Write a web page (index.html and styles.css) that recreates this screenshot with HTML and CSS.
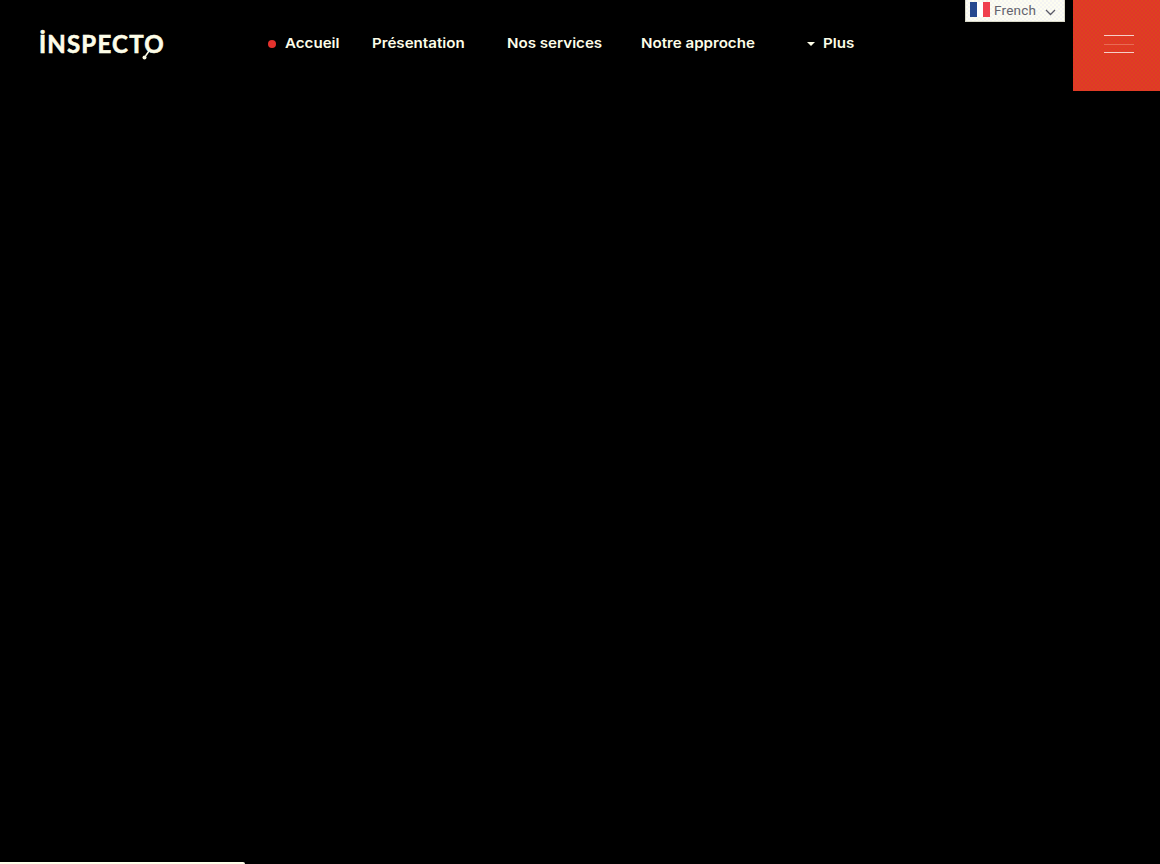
FILE: index.html
```html
<!DOCTYPE html>
<html lang="fr">

<head>
    <meta charset="UTF-8">
    <meta name="viewport" content="width=device-width, initial-scale=1.0">
    <link rel="stylesheet" href="styles.css">
    <title>Inspecto</title>
</head>

<body>

    <header class="entete">
        <a class="logo" href="#">
            <span class="logo-texte">İNSPECTO</span>
            <svg class="logo-queue" width="10" height="10" viewBox="0 0 10 10">
                <path d="M8 1L4.500 6" fill="none" stroke="#fdfde8" stroke-width="1.500"/>
                <circle cx="3.500" cy="7.500" r="2" fill="#fdfde8"/>
            </svg>
        </a>

        <nav class="menu">
            <a class="lien lien-actif" href="#"><span class="puce"></span><span class="mot">Accueil</span></a>
            <a class="lien lien-presentation" href="#"><span class="mot">Présentation</span></a>
            <a class="lien lien-services" href="#"><span class="mot">Nos services</span></a>
            <a class="lien lien-approche" href="#"><span class="mot">Notre approche</span></a>
            <a class="lien lien-plus" href="#"><span class="fleche"></span><span class="mot">Plus</span></a>
        </nav>

        <div class="langue">
            <svg class="drapeau" width="20" height="15" viewBox="0 0 20 15">
                <rect width="7" height="15" fill="#26488f"/>
                <rect x="7" width="6" height="15" fill="#fff"/>
                <rect x="13" width="7" height="15" fill="#f0404f"/>
            </svg>
            <span class="langue-nom">French</span>
            <svg class="chevron" width="11" height="7" viewBox="0 0 11 7">
                <path d="M1 1l4.500 4.500L10 1" fill="none" stroke="#5a5a66" stroke-width="1.300"/>
            </svg>
        </div>

        <button class="burger" type="button" aria-label="Menu">
            <span></span>
            <span class="trait-pale"></span>
            <span></span>
        </button>
    </header>

    <div class="barre-bas"></div>

</body>
</html>
```

FILE: styles.css
```css
html, body {
    height: 100%;
}

body {
    margin: 0;
    background: #000;
    overflow: hidden;
    display: flex;
    flex-direction: column;
    justify-content: space-between;
    font-family: "Inter", "Liberation Sans", sans-serif;
}

.entete {
    display: flex;
    align-items: flex-start;
    height: 91px;
}

.logo {
    position: relative;
    width: 229px;
    margin: 28px 0 0 39px;
    flex-shrink: 0;
    text-decoration: none;
}

.logo-texte {
    color: #fdfde8;
    font-family: "Lato", "Liberation Sans", sans-serif;
    font-size: 24px;
    font-weight: 700;
    line-height: 32px;
    letter-spacing: 1.200px;
    white-space: nowrap;
    -webkit-text-stroke: 0.6px #fdfde8;
}

.logo-queue {
    position: absolute;
    left: 102px;
    top: 22px;
}

.menu {
    display: flex;
    width: 600px;
    margin-top: 33px;
    flex-shrink: 0;
}

.lien {
    display: flex;
    align-items: center;
    color: #fdfde8;
    font-size: 13.500px;
    font-weight: 600;
    line-height: 20px;
    text-decoration: none;
    white-space: nowrap;
}

.mot {
    display: inline-block;
    transform: scaleX(1.120);
    transform-origin: left;
}

.lien-actif {
    width: 104px;
}

.puce {
    width: 8px;
    height: 8px;
    margin: 2px 9px 0 0;
    border-radius: 50%;
    background: #e5322d;
}

.lien-presentation {
    width: 135px;
}

.lien-services {
    width: 134px;
}

.lien-approche {
    width: 166px;
}

.fleche {
    width: 0;
    height: 0;
    margin: 2px 8px 0 0;
    border-left: 4px solid transparent;
    border-right: 4px solid transparent;
    border-top: 4px solid #fdfde8;
}

.langue {
    display: flex;
    align-items: center;
    width: 100px;
    height: 22px;
    margin-left: 97px;
    padding: 0 0 2px 4px;
    box-sizing: border-box;
    background: repeating-conic-gradient(#fdfdf0 0% 25%, #f4f4f2 0% 50%) 0 0 / 4px 4px;
    border: 1px solid #d8d8c8;
    border-top: 0;
    flex-shrink: 0;
}

.drapeau {
    flex-shrink: 0;
}

.langue-nom {
    margin-left: 4px;
    color: #63636e;
    font-family: "Roboto", "Liberation Sans", sans-serif;
    font-size: 13.500px;
    letter-spacing: 0.200px;
}

.chevron {
    margin: 6px 0 0 9px;
}

.burger {
    display: flex;
    flex-direction: column;
    align-items: center;
    gap: 7.600px;
    width: 87px;
    height: 91px;
    margin-left: 8px;
    padding: 35px 0 0 5px;
    background: repeating-conic-gradient(#e2352a 0% 25%, #dc4220 0% 50%) 0 0 / 4px 4px;
    border: 0;
    flex-shrink: 0;
}

.burger span {
    width: 30px;
    height: 1px;
    background: #f6cfc8;
}

.burger .trait-pale {
    background: #ea6a55;
}

.barre-bas {
    width: 245px;
    height: 2px;
    background: #fdfde8;
    border-top-right-radius: 3px;
}
```
